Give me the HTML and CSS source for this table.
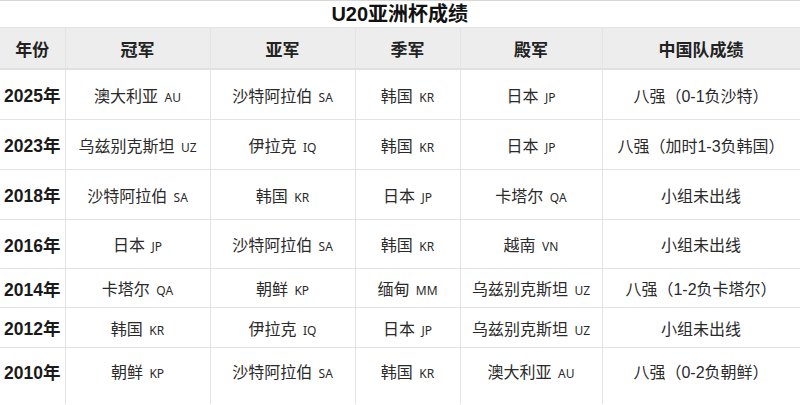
FILE: index.html
```html
<!DOCTYPE html>
<html lang="zh">
<head>
<meta charset="utf-8">
<link rel="stylesheet" href="styles.css">
</head>
<body>
<table class="results">
  <colgroup>
    <col class="c-year"><col class="c-team"><col class="c-team"><col class="c-third"><col class="c-fourth"><col class="c-china">
  </colgroup>
  <tr class="title-row"><td colspan="6" class="title">U20亚洲杯成绩</td></tr>
  <tr class="head-row">
    <th>年份</th><th>冠军</th><th>亚军</th><th>季军</th><th>殿军</th><th>中国队成绩</th>
  </tr>
  <tr class="r50">
    <td class="year">2025年</td><td>澳大利亚 <span class="cc">AU</span></td><td>沙特阿拉伯 <span class="cc">SA</span></td><td>韩国 <span class="cc">KR</span></td><td>日本 <span class="cc">JP</span></td><td>八强（0-1负沙特）</td>
  </tr>
  <tr class="r50">
    <td class="year">2023年</td><td>乌兹别克斯坦 <span class="cc">UZ</span></td><td>伊拉克 <span class="cc">IQ</span></td><td>韩国 <span class="cc">KR</span></td><td>日本 <span class="cc">JP</span></td><td>八强（加时1-3负韩国）</td>
  </tr>
  <tr class="r50">
    <td class="year">2018年</td><td>沙特阿拉伯 <span class="cc">SA</span></td><td>韩国 <span class="cc">KR</span></td><td>日本 <span class="cc">JP</span></td><td>卡塔尔 <span class="cc">QA</span></td><td>小组未出线</td>
  </tr>
  <tr class="r49">
    <td class="year">2016年</td><td>日本 <span class="cc">JP</span></td><td>沙特阿拉伯 <span class="cc">SA</span></td><td>韩国 <span class="cc">KR</span></td><td>越南 <span class="cc">VN</span></td><td>小组未出线</td>
  </tr>
  <tr class="r39">
    <td class="year">2014年</td><td>卡塔尔 <span class="cc">QA</span></td><td>朝鲜 <span class="cc">KP</span></td><td>缅甸 <span class="cc">MM</span></td><td>乌兹别克斯坦 <span class="cc">UZ</span></td><td>八强（1-2负卡塔尔）</td>
  </tr>
  <tr class="r40">
    <td class="year">2012年</td><td>韩国 <span class="cc">KR</span></td><td>伊拉克 <span class="cc">IQ</span></td><td>日本 <span class="cc">JP</span></td><td>乌兹别克斯坦 <span class="cc">UZ</span></td><td>小组未出线</td>
  </tr>
  <tr class="r-last">
    <td class="year">2010年</td><td>朝鲜 <span class="cc">KP</span></td><td>沙特阿拉伯 <span class="cc">SA</span></td><td>韩国 <span class="cc">KR</span></td><td>澳大利亚 <span class="cc">AU</span></td><td>八强（0-2负朝鲜）</td>
  </tr>
</table>
</body>
</html>
```
FILE: styles.css
```css
html, body {
  margin: 0;
  padding: 0;
  background: #ffffff;
}
body {
  font-family: "Liberation Sans", "Noto Sans CJK SC", sans-serif;
  color: #222;
  overflow: hidden;
}
.results {
  width: 800px;
  table-layout: fixed;
  border-collapse: collapse;
}
.c-year { width: 65px; }
.c-team { width: 145px; }
.c-third { width: 105px; }
.c-fourth { width: 142px; }
.c-china { width: 198px; }

.results td, .results th {
  border: 1px solid #e3e3e3;
  text-align: center;
  padding: 0;
  white-space: nowrap;
  font-size: 16px;
  font-weight: normal;
  color: #2a2a2a;
}
.results tr > :first-child {
  border-left: none;
}
.title-row td {
  height: 26px;
  font-size: 20px;
  font-weight: bold;
  color: #111;
  border-left: none;
  border-bottom: 1px solid #e3e3e3;
  border-top: 1px solid #d6d6d6;
  border-right: 1px solid #dcdcdc;
  line-height: 24px;
}
.head-row th {
  height: 40px;
  background: #ededed;
  font-size: 17px;
  font-weight: bold;
  color: #222;
  border-bottom: 2px solid #e0e0e0;
}
.results td.year {
  font-size: 17.5px;
  font-weight: bold;
  color: #1a1a1a;
}
.r50 td { height: 49px; }
.r49 td { height: 48px; }
.r39 td { height: 38px; }
.r40 td { height: 39px; }
.r-last td { height: 46px; padding-bottom: 10px; border-bottom: none; }
.cc {
  font-family: "Noto Sans", "Liberation Sans", sans-serif;
  font-size: 12px;
  margin-left: 2px;
  color: #2a2a2a;
}
```
